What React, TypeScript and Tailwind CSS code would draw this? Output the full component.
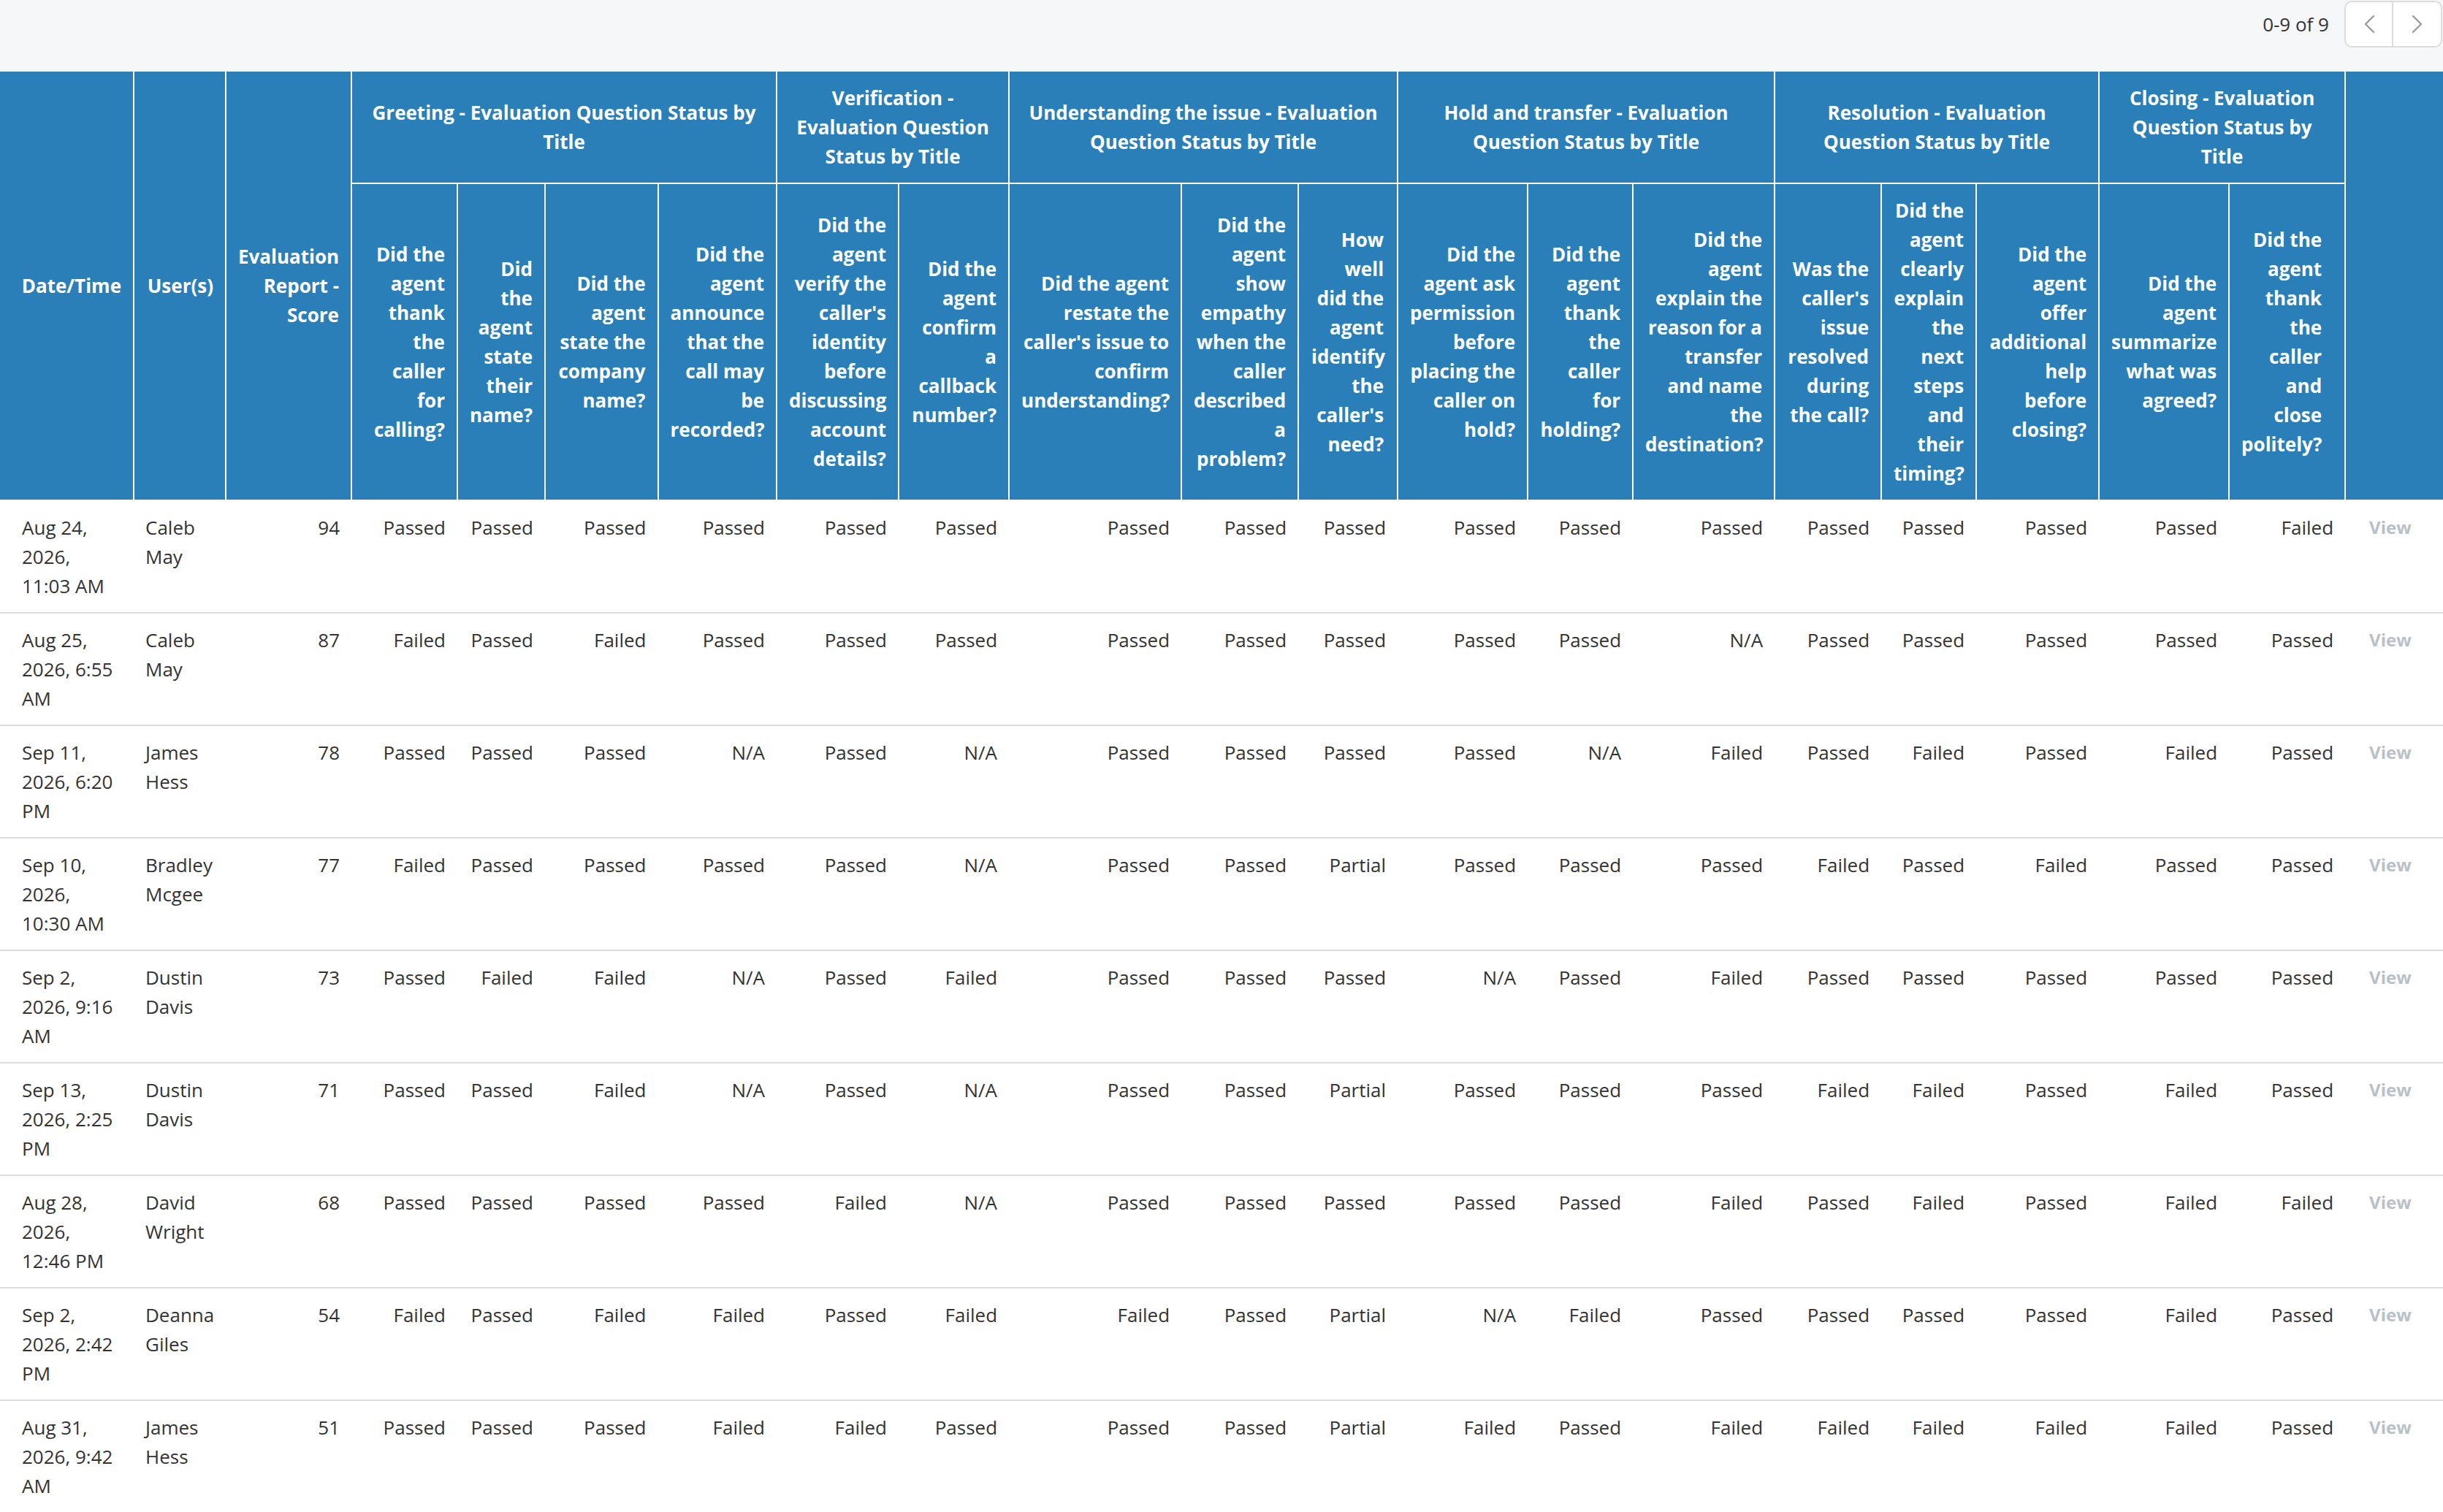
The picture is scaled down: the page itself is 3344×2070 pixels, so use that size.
import React from "react";

type Group = { title: string; questions: string[] };

const groups: Group[] = [
  {
    title: "Greeting - Evaluation Question Status by Title",
    questions: [
      "Did the agent thank the caller for calling?",
      "Did the agent state their name?",
      "Did the agent state the company name?",
      "Did the agent announce that the call may be recorded?",
    ],
  },
  {
    title: "Verification - Evaluation Question Status by Title",
    questions: [
      "Did the agent verify the caller's identity before discussing account details?",
      "Did the agent confirm a callback number?",
    ],
  },
  {
    title: "Understanding the issue - Evaluation Question Status by Title",
    questions: [
      "Did the agent restate the caller's issue to confirm understanding?",
      "Did the agent show empathy when the caller described a problem?",
      "How well did the agent identify the caller's need?",
    ],
  },
  {
    title: "Hold and transfer - Evaluation Question Status by Title",
    questions: [
      "Did the agent ask permission before placing the caller on hold?",
      "Did the agent thank the caller for holding?",
      "Did the agent explain the reason for a transfer and name the destination?",
    ],
  },
  {
    title: "Resolution - Evaluation Question Status by Title",
    questions: [
      "Was the caller's issue resolved during the call?",
      "Did the agent clearly explain the next steps and their timing?",
      "Did the agent offer additional help before closing?",
    ],
  },
  {
    title: "Closing - Evaluation Question Status by Title",
    questions: [
      "Did the agent summarize what was agreed?",
      "Did the agent thank the caller and close politely?",
    ],
  },
];

// per-question header padding (index across all questions)
const qPad: Record<number, string> = {
  8: "pl-[17px] pr-[18px]",
  16: "pl-4 pr-[31px]",
};

type Row = { date: string; user: string; score: number; s: string[] };

const P = "Passed";
const F = "Failed";
const N = "N/A";
const R = "Partial";

const rows: Row[] = [
  { date: "Aug 24, 2026, 11:03 AM", user: "Caleb May", score: 94, s: [P, P, P, P, P, P, P, P, P, P, P, P, P, P, P, P, F] },
  { date: "Aug 25, 2026, 6:55 AM", user: "Caleb May", score: 87, s: [F, P, F, P, P, P, P, P, P, P, P, N, P, P, P, P, P] },
  { date: "Sep 11, 2026, 6:20 PM", user: "James Hess", score: 78, s: [P, P, P, N, P, N, P, P, P, P, N, F, P, F, P, F, P] },
  { date: "Sep 10, 2026, 10:30 AM", user: "Bradley Mcgee", score: 77, s: [F, P, P, P, P, N, P, P, R, P, P, P, F, P, F, P, P] },
  { date: "Sep 2, 2026, 9:16 AM", user: "Dustin Davis", score: 73, s: [P, F, F, N, P, F, P, P, P, N, P, F, P, P, P, P, P] },
  { date: "Sep 13, 2026, 2:25 PM", user: "Dustin Davis", score: 71, s: [P, P, F, N, P, N, P, P, R, P, P, P, F, F, P, F, P] },
  { date: "Aug 28, 2026, 12:46 PM", user: "David Wright", score: 68, s: [P, P, P, P, F, N, P, P, P, P, P, F, P, F, P, F, F] },
  { date: "Sep 2, 2026, 2:42 PM", user: "Deanna Giles", score: 54, s: [F, P, F, F, P, F, F, P, R, N, F, P, P, P, P, F, P] },
  { date: "Aug 31, 2026, 9:42 AM", user: "James Hess", score: 51, s: [P, P, P, F, F, P, P, P, R, F, P, F, F, F, F, F, P] },
];

function Chevron({ dir }: { dir: "left" | "right" }) {
  return (
    <svg width="16" height="26" viewBox="0 0 16 26" fill="none">
      <path
        d={dir === "left" ? "M14 2 L3 13 L14 24" : "M2 2 L13 13 L2 24"}
        stroke="#9b9b9b"
        strokeWidth="2.4"
        strokeLinecap="round"
        strokeLinejoin="round"
      />
    </svg>
  );
}

export default function App() {
  const thBase = "bg-[#2b7fb8] text-white font-bold align-middle py-4 border-white border-b-2";
  const allQuestions = groups.flatMap((g) => g.questions);
  return (
    <div className="min-h-screen bg-white font-['Open_Sans',sans-serif] text-[26px] leading-[40px] text-[#333333]">
      <div className="h-[98px] bg-[#f6f7f9] flex justify-end items-start pt-[1px] pr-[1px]">
        <div className="flex items-center h-[64px]">
          <span className="mr-[21px] text-[#333333]">0-9 of 9</span>
          <div className="flex h-[64px] rounded-[10px] border-2 border-[#dcdcdc] bg-white overflow-hidden">
            <button className="w-[65px] h-full flex items-center justify-center border-r-2 border-[#dcdcdc]">
              <Chevron dir="left" />
            </button>
            <button className="w-[65px] h-full flex items-center justify-center">
              <Chevron dir="right" />
            </button>
          </div>
        </div>
      </div>
      <table className="table-fixed border-collapse w-[3344px]">
        <colgroup>
          <col className="w-[183px]" />
          <col className="w-[126px]" />
          <col className="w-[172px]" />
          <col className="w-[145px]" />
          <col className="w-[120px]" />
          <col className="w-[154.5px]" />
          <col className="w-[162.5px]" />
          <col className="w-[167px]" />
          <col className="w-[151px]" />
          <col className="w-[236px]" />
          <col className="w-[160px]" />
          <col className="w-[136px]" />
          <col className="w-[178px]" />
          <col className="w-[144px]" />
          <col className="w-[194px]" />
          <col className="w-[146px]" />
          <col className="w-[130px]" />
          <col className="w-[168px]" />
          <col className="w-[178px]" />
          <col className="w-[159px]" />
          <col className="w-[134px]" />
        </colgroup>
        <thead>
          <tr>
            <th rowSpan={2} className={`${thBase} px-4 text-right border-r-2`}>Date/Time</th>
            <th rowSpan={2} className={`${thBase} px-4 text-right border-r-2`}>User(s)</th>
            <th rowSpan={2} className={`${thBase} px-4 text-right border-r-2`}>Evaluation Report - Score</th>
            {groups.map((g) => (
              <th
                key={g.title}
                colSpan={g.questions.length}
                className={`${thBase} px-4 text-center border-r-2`}
              >
                {g.title}
              </th>
            ))}
            <th rowSpan={2} className={`${thBase} px-4`}></th>
          </tr>
          <tr>
            {allQuestions.map((q, i) => (
              <th key={q} className={`${thBase} ${qPad[i] ?? "px-4"} text-right border-r-2`}>
                {q}
              </th>
            ))}
          </tr>
        </thead>
        <tbody>
          {rows.map((r, i) => (
            <tr key={i} className="border-b-2 border-[#dddddd]">
              <td className="pl-[30px] pr-4 py-4 align-top text-left">{r.date}</td>
              <td className="px-4 py-4 align-top text-left">{r.user}</td>
              <td className="px-4 py-4 align-top text-right">{r.score}</td>
              {r.s.map((v, j) => (
                <td key={j} className="px-4 py-4 align-top text-right">
                  {v}
                </td>
              ))}
              <td className="pl-[33px] pr-2 py-4 align-top text-left font-bold text-[24px] text-[#b9c0c7]">View</td>
            </tr>
          ))}
        </tbody>
      </table>
    </div>
  );
}
